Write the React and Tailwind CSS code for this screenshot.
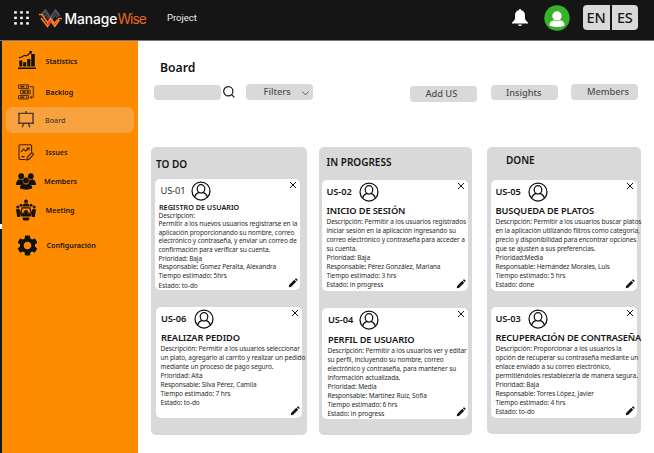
import React from 'react';

const Avatar = ({ className = '' }) => (
  <svg viewBox="0 0 20 20" className={`size-5 shrink-0 ${className}`} fill="none" stroke="#111" strokeWidth="1.25">
    <circle cx="10" cy="10" r="9" />
    <ellipse cx="10" cy="7.8" rx="3.8" ry="4.2" />
    <path d="M3.7 16.4c.4-2.8 1.8-4.2 4.6-5M16.3 16.4c-.4-2.8-1.8-4.2-4.6-5" />
  </svg>
);

const Cross = () => (
  <svg viewBox="0 0 8 8" className="size-2 shrink-0" stroke="#151515" strokeWidth="1">
    <path d="M1 1l6 6M7 1L1 7" />
  </svg>
);

const Pencil = () => (
  <svg viewBox="0 0 10 10" className="absolute right-[2px] bottom-[2px] size-[10px]" fill="#111">
    <path d="M.7 9.3l.6-2.5 5-5 1.9 1.9-5 5zM6.9 1.2l.6-.6q.5-.4 1 0l.9.9q.4.5 0 1l-.6.6z" />
  </svg>
);

function Card({ id, title, lines, last, box, head, idClass = 'w-[32.5px] font-[560]', titleClass, bodyClass }) {
  return (
    <article className={`relative h-[111px] rounded-[5px] bg-white ${box}`}>
      <div className={`flex items-start pr-[3px] ${head}`}>
        <span className={`mt-[5px] shrink-0 text-[9.3px] leading-[14px] tracking-[-0.1px] whitespace-nowrap ${idClass}`}>{id}</span>
        <Avatar className="mt-[2px]" />
        <span className="ml-auto pt-[2px]"><Cross /></span>
      </div>
      <h3 className={`whitespace-nowrap ${titleClass}`}>{title}</h3>
      <div className={`text-[6.5px] tracking-[-0.09px] whitespace-nowrap text-[#2b2b2b] ${bodyClass}`}>
        {lines.map((l) => <p key={l}>{l}</p>)}
        {last && <p className="mt-[1px]">{last}</p>}
      </div>
      <Pencil />
    </article>
  );
}

const bigTitle = 'text-[9.3px] leading-[12px] font-[560] tracking-[-0.16px]';

const Column = ({ title, className, titleClass, children }) => (
  <section className={`rounded-[5px] bg-[#d9d9d9] ${className}`}>
    <h2 className={`h-[14px] text-[10px] leading-[14px] font-semibold ${titleClass}`}>{title}</h2>
    {children}
  </section>
);

const StatsIcon = () => (
  <svg viewBox="0 0 18 18" className="size-[18px]" fill="#111">
    <path d="M0 16.5h18V18H0zM1.3 9.5h3v6h-3zM5.2 11.3h3v4.2h-3zM9.2 8h3.2v7.5H9.2zM13.2 3h3.6v12.5h-3.6z" />
    <path d="M.8 6.7c4 .3 4.5-2.6 6-2.3 1 .2 1 1 2.3.1L13 1.2" fill="none" stroke="#111" strokeWidth="1.2" />
    <path d="M10.6.2L14 .1l-.6 3.2z" />
  </svg>
);
const BacklogIcon = () => (
  <svg viewBox="0 0 16 16" className="size-[16px]" fill="none" stroke="#4a2c0a" strokeWidth="1">
    <path d="M.6.8h10v3.6H.6zM2.6 6.2h9.6v3.6H2.6zM.6 11.6h10v3.4H.6zM12 2.6h3.3v10.7H12.5M14 11.8l-1.7 1.5 1.7 1.5" />
    <path d="M2.3 2.6h4M8 2.6h1.3M4.4 8h3M8.6 8h2.3M2.3 13.3h4M8 13.3h1.3" strokeWidth="1.8" />
  </svg>
);
const BoardIcon = () => (
  <svg viewBox="0 0 18 17" className="h-[17px] w-[18px]" fill="none" stroke="#4d3c2b" strokeWidth="1.4">
    <path d="M9 0v2.3M2 2.4h14v9.8H2zM1 2.4h16M1 12.2h16M6.7 12.5l-1.5 3.7M11.3 12.5l1.5 3.7" />
  </svg>
);
const IssuesIcon = () => (
  <svg viewBox="0 0 17 17" className="size-[17px]" fill="none" stroke="#352006" strokeWidth="1.1">
    <path d="M7.5 15.5H2.2Q1 15.5 1 14.3V1.8Q1 .7 2.2.7h10.2q1.2 0 1.2 1.1v6M3 8l2.4-2.7L7.8 7l3-3M8.6 4h2.4v2.3M3.5 12.6h3M9.3 13.4l4.4-4.8 1.9 1.7-4.4 4.9-2.4.7z" />
  </svg>
);
const MembersIcon = () => (
  <svg viewBox="0 0 20 17" className="h-[17px] w-[20px]" fill="#111">
    <circle cx="5.2" cy="3.2" r="2.9" /><circle cx="14.8" cy="3.2" r="2.9" />
    <path d="M0 12Q0 6.6 3.8 6.2q2 1 3.3 0-.7 2.3.8 4.2l-2.6 1.6zM20 12q0-5.4-3.8-5.8-2 1-3.3 0 .7 2.3-.8 4.2l2.6 1.6z" />
    <circle cx="10" cy="7.5" r="3.2" stroke="#ff8c00" strokeWidth=".4" />
    <path d="M3.8 15.5q0-4.2 4-4.8 2.2 1.4 4.4 0 4 .6 4 4.8-6.2 2.3-12.4 0z" />
  </svg>
);
const MeetingIcon = () => (
  <svg viewBox="0 0 20 22" className="h-[22px] w-[20px]" fill="#19120a">
    <circle cx="10" cy="2.3" r="1.9" /><path d="M6.7 7.4q0-2.7 2-2.8h2.6q2 .1 2 2.8z" />
    <circle cx="5" cy="6.3" r="1.5" /><circle cx="15" cy="6.3" r="1.5" />
    <circle cx="1.8" cy="8" r="1.5" /><circle cx="18.2" cy="8" r="1.5" />
    <path d="M0 10.2l3.3-.2 1.7 4-1.2 4H1.2zM20 10.2l-3.3-.2-1.7 4 1.2 4h2.6z" />
    <path d="M6.2 8.8h7.6l1.5 5.4H4.7z" fill="none" stroke="#19120a" strokeWidth="1.3" />
    <circle cx="10" cy="13" r="2" /><path d="M4.7 15h10.6v2.6H4.7zM6.8 18.5h6.4V21q-3.2 1-6.4 0z" />
  </svg>
);
const GearIcon = () => (
  <svg viewBox="0 0 24 24" className="size-[25px] shrink-0" fill="#111">
    <path d="M19.14 12.94c.04-.3.06-.61.06-.94 0-.32-.02-.64-.07-.94l2.03-1.58a.49.49 0 0 0 .12-.61l-1.92-3.32a.488.488 0 0 0-.59-.22l-2.39.96c-.5-.38-1.03-.7-1.62-.94l-.36-2.54a.484.484 0 0 0-.48-.41h-3.84c-.24 0-.43.17-.47.41l-.36 2.54c-.59.24-1.13.57-1.62.94l-2.39-.96c-.22-.08-.47 0-.59.22L2.74 8.87c-.12.21-.08.47.12.61l2.03 1.58c-.05.3-.09.63-.09.94s.02.64.07.94l-2.03 1.58a.49.49 0 0 0-.12.61l1.92 3.32c.12.22.37.29.59.22l2.39-.96c.5.38 1.03.7 1.62.94l.36 2.54c.05.24.24.41.48.41h3.84c.24 0 .44-.17.47-.41l.36-2.54c.59-.24 1.13-.56 1.62-.94l2.39.96c.22.08.47 0 .59-.22l1.92-3.32c.12-.22.07-.47-.12-.61l-2.01-1.58zM12 15.6A3.61 3.61 0 0 1 8.4 12c0-1.98 1.62-3.6 3.6-3.6s3.6 1.62 3.6 3.6-1.62 3.6-3.6 3.6z" />
  </svg>
);

const nav = [
  { label: 'Statistics', icon: <StatsIcon />, row: 'h-[31px] mt-[5px] font-semibold', iconBox: 'pb-[3px]', text: 'ml-[5.5px]' },
  { label: 'Backlog', icon: <BacklogIcon />, row: 'h-[30px] font-semibold', iconBox: 'pr-[1px]', text: 'ml-[5.5px]' },
  { label: 'Board', icon: <BoardIcon />, row: 'h-[26px] rounded-[7px] bg-[#f7a23e] font-medium text-[#4d3c2b]', iconBox: 'pr-[2px] pb-[1px]', text: 'ml-[5px]' },
  { label: 'Issues', icon: <IssuesIcon />, row: 'h-[31px] mt-[4px] font-semibold', iconBox: 'pr-[1px]', text: 'ml-[5.5px]' },
  { label: 'Members', icon: <MembersIcon />, row: 'h-[27px] font-semibold', iconBox: 'pr-[1px]', text: 'ml-[4px]' },
  { label: 'Meeting', icon: <MeetingIcon />, row: 'h-[30px] font-semibold', iconBox: 'pr-[1px]', text: 'ml-[5.5px]' },
  { label: 'Configuración', icon: <GearIcon />, row: 'h-[41px] font-semibold', iconBox: 'ml-[1px] -mr-[1px]', text: 'ml-[6.5px]' },
];

const ActionButton = ({ children, className }) => (
  <button className={`h-[15.5px] w-[67px] shrink-0 rounded-[4px] bg-[#d9d9d9] text-left text-[9.3px] leading-[15.5px] font-[540] tracking-[-0.05px] text-[#505050] whitespace-nowrap ${className}`}>{children}</button>
);

export default function App() {
  return (
    <div className="flex h-[453px] w-[654px] flex-col overflow-hidden bg-white font-['Noto_Sans',sans-serif] text-[#151515]">
      <header className="flex h-[41px] shrink-0 items-start border-b border-[#777] bg-[#151515] text-white">
        <svg viewBox="0 0 16 14" className="mt-[11px] ml-[14px] h-[14px] w-[16px]" fill="white">
          {[0, 6, 12].map((x) => [0, 5.5, 11].map((y) => <rect key={`${x}-${y}`} x={x + 0.2} y={y + 0.2} width="2.6" height="2.4" />))}
        </svg>
        <svg viewBox="0 0 23 19" className="mt-[8.5px] ml-[9px] h-[19px] w-[23px]" fill="none" strokeWidth="1.7">
          <path d="M3 5.5L6.3 1.5l5.2 7.3 5-7.3 4 5.5" stroke="#4c5261" strokeWidth="2.2" />
          <path d="M5 7.5l1.5-1.8 5 6.6 5-6.6 2 3" stroke="#3d4352" />
          <path d="M0 5.5h3l5.8 8.5 2.9-4.6 3.6 5L20 9.5h3" stroke="#ff7c22" />
          <path d="M2 9l6.5 8.3L12 12l3.8 5.3 4.5-6.3" stroke="#ff7c22" />
          <path d="M9.3 15.6l2.5-3.6" stroke="#e72e42" />
        </svg>
        <div className="mt-[8.5px] ml-[2.5px] w-[102.5px] font-['Inter',sans-serif] text-[13.8px] leading-[20px] font-medium tracking-[-0.05px] whitespace-nowrap">
          Manage<span className="font-normal tracking-[-0.95px] text-[#e9661e]">Wise</span>
        </div>
        <div className="mt-[11px] font-['Roboto',sans-serif] text-[9.5px] leading-[14px] text-[#eee]">Project</div>
        <svg viewBox="0 0 18 18" className="mt-[9px] ml-auto size-[18px]" fill="white">
          <path d="M9 0q1.1 0 1.2 1.2Q13.8 2 14 6.2v3.5q.1 1.6 3 3.7v1H1v-1q2.9-2.1 3-3.7V6.2Q4.2 2 7.8 1.2 7.9 0 9 0zM7 15.4h4Q10.6 17 9 17t-2-1.6z" />
        </svg>
        <svg viewBox="0 0 26 26" className="mt-[4.5px] ml-[15.5px] size-[26px]">
          <circle cx="13" cy="13" r="12.7" fill="#37b32a" />
          <circle cx="13" cy="11" r="4.7" fill="white" />
          <path d="M5.5 20.5q0-4.4 4-5.2 3.5 2 7 0 4 .8 4 5.2-7.5 3-15 0z" fill="white" />
        </svg>
        <div className="mt-[5px] mr-[16px] ml-[12.5px] flex gap-[2px] text-center text-[14.5px] leading-[25px] font-medium tracking-[-0.2px] text-[#151515]">
          <span className="h-[24.5px] w-[27px] rounded-l-[4px] bg-[#d9d9d9]">EN</span>
          <span className="h-[24.5px] w-[26.5px] rounded-r-[4px] bg-[#d9d9d9]">ES</span>
        </div>
      </header>

      <div className="flex min-h-0 flex-1">
        <div className="flex w-[2px] shrink-0 flex-col bg-[#171a24] pt-[183px]"><div className="h-[5px] bg-white" /></div>
        <nav className="flex w-[136px] shrink-0 flex-col bg-[#ff8c00] pr-[4px] pl-[4px]">
          {nav.map((n) => (
            <div key={n.label} className={`flex shrink-0 items-center pl-[7px] text-[7.2px] ${n.row}`}>
              <span className={`flex w-[27px] shrink-0 justify-center ${n.iconBox}`}>{n.icon}</span>
              <span className={n.text}>{n.label}</span>
            </div>
          ))}
        </nav>

        <main className="flex min-w-0 flex-1 flex-col">
          <h1 className="mt-[18px] ml-[22px] h-[18px] text-[12.2px] leading-[18px] font-semibold">Board</h1>
          <div className="mt-[7px] flex h-[22px] items-start pl-[16px]">
            <div className="mt-[0.5px] h-[15.5px] w-[67px] rounded-[4px] bg-[#d9d9d9]" />
            <svg viewBox="0 0 12 12" className="mt-[1.5px] ml-[2px] size-[12px]" fill="none" stroke="#151515" strokeWidth="1.2">
              <circle cx="5.3" cy="5.3" r="4.6" /><path d="M8.6 8.6l2.8 2.8" />
            </svg>
            <button className="ml-[11px] flex h-[15.5px] w-[67px] items-center rounded-[4px] bg-[#d9d9d9] pl-[17.5px] text-[9.3px] font-[540] text-[#505050]">
              Filters
              <svg viewBox="0 0 7 5" className="mt-[4px] ml-[11px] h-[5px] w-[7px]" fill="none" stroke="#555" strokeWidth=".9"><path d="M.5.5l3 3.5 3-3.5" /></svg>
            </button>
            <ActionButton className="mt-[2px] ml-[97px] pl-[15.5px]">Add US</ActionButton>
            <ActionButton className="mt-[0.5px] ml-[13.5px] pl-[15.5px]">Insights</ActionButton>
            <ActionButton className="ml-[13.5px] pl-[16px]">Members</ActionButton>
          </div>

          <div className="mt-[41px] flex items-start pl-[13px]">
            <Column title="TO DO" className="h-[287.5px] w-[156px] pt-[10px]" titleClass="pl-[5px]">
              <Card id="US-01" idClass="w-[30px] font-normal text-[#333]" title="REGISTRO DE USUARIO"
                box="mt-[8px] ml-[3.5px] w-[145.5px]" head="h-[22.5px] pl-[6px]"
                titleClass="pl-[4.5px] text-[7.2px] leading-[10px] font-[560]" bodyClass="pl-[4px] leading-[8.65px]"
                lines={['Descripcion:', 'Permitir a los nuevos usuarios registrarse en la', 'aplicación proporcionando su nombre, correo', 'electrónico y contraseña, y enviar un correo de', 'confirmación para verificar su cuenta.', 'Prioridad: Baja', 'Responsable: Gomez Peralta, Alexandra', 'Tiempo estimado: 5hrs']} last="Estado: to-do" />
              <Card id="US-06" title="REALIZAR PEDIDO"
                box="mt-[16.5px] ml-[5px] w-[146px]" head="h-[25px] pl-[5px]"
                titleClass={`pl-[5px] ${bigTitle}`} bodyClass="pl-[4.5px] leading-[9.05px]"
                lines={['Descripción: Permitir a los usuarios seleccionar', 'un plato, agregarlo al carrito y realizar un pedido', 'mediante un proceso de pago seguro.', 'Prioridad: Alta', 'Responsable: Silva Pérez, Camila', 'Tiempo estimado: 7 hrs', 'Estado: to-do']} />
            </Column>
            <Column title="IN PROGRESS" className="ml-[12px] h-[287.5px] w-[152.5px] pt-[8px]" titleClass="pl-[7.5px]">
              <Card id="US-02" title="INICIO DE SESIÓN"
                box="mt-[10.5px] ml-[3px] w-[146px]" head="h-[25px] pl-[4.5px]"
                titleClass={`pl-[4.5px] ${bigTitle}`} bodyClass="pl-[4.5px] leading-[9.05px]"
                lines={['Descripción: Permitir a los usuarios registrados', 'iniciar sesión en la aplicación ingresando su', 'correo electrónico y contraseña para acceder a', 'su cuenta.', 'Prioridad: Baja', 'Responsable: Pérez González, Mariana', 'Tiempo estimado: 3 hrs', 'Estado: in progress']} />
              <Card id="US-04" idClass="w-[31px] font-[560]" title="PERFIL DE USUARIO"
                box="mt-[17px] ml-[3px] w-[146px]" head="h-[26.5px] pl-[6px]"
                titleClass={`pl-[6px] ${bigTitle}`} bodyClass="pl-[5.5px] leading-[9.05px]"
                lines={['Descripción: Permitir a los usuarios ver y editar', 'su perfil, incluyendo su nombre, correo', 'electrónico y contraseña, para mantener su', 'información actualizada.', 'Prioridad: Media', 'Responsable: Martínez Ruiz, Sofía', 'Tiempo estimado: 6 hrs', 'Estado: in progress']} />
            </Column>
            <Column title="DONE" className="ml-[15.5px] h-[286.5px] w-[154px] pt-[6px]" titleClass="pl-[19px]">
              <Card id="US-05" title="BUSQUEDA DE PLATOS"
                box="mt-[13px] ml-[4px] w-[145.5px]" head="h-[25px] pl-[4.5px]"
                titleClass={`pl-[4.5px] ${bigTitle}`} bodyClass="pl-[4.5px] leading-[9.05px]"
                lines={['Descripción: Permitir a los usuarios buscar platos', 'en la aplicación utilizando filtros como categoría,', 'precio y disponibilidad para encontrar opciones', 'que se ajusten a sus preferencias.', 'Prioridad:Media', 'Responsable: Hernández Morales, Luis', 'Tiempo estimado: 5 hrs', 'Estado: done']} />
              <Card id="US-03" title="RECUPERACIÓN DE CONTRASEÑA"
                box="mt-[15.5px] ml-[4px] w-[145.5px]" head="h-[25px] pl-[4.5px]"
                titleClass={`pl-[4.5px] ${bigTitle}`} bodyClass="pl-[4.5px] leading-[9.05px]"
                lines={['Descripción: Proporcionar a los usuarios la', 'opción de recuperar su contraseña mediante un', 'enlace enviado a su correo electrónico,', 'permitiéndoles restablecerla de manera segura.', 'Prioridad: Baja', 'Responsable: Torres López, Javier', 'Tiempo estimado: 4 hrs', 'Estado: to-do']} />
            </Column>
          </div>
        </main>
      </div>
    </div>
  );
}
